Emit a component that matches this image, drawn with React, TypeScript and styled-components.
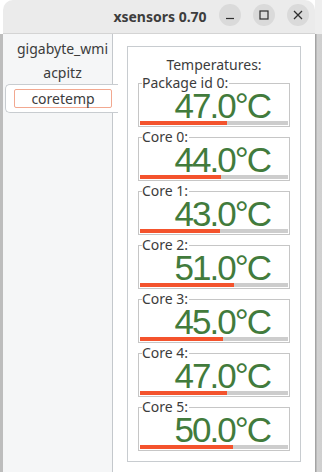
import React from "react";
import styled, { createGlobalStyle } from "styled-components";

const Global = createGlobalStyle`
  html, body { margin: 0; padding: 0; background: #ffffff; }
  body { width: 322px; height: 472px; overflow: hidden; font-family: "Noto Sans", "DejaVu Sans", sans-serif; }
  #root { width: 322px; height: 472px; }
`;

const Screen = styled.div`
  display: flex;
  width: 322px;
  height: 472px;
  overflow: hidden;
`;

const LeftEdge = styled.div`
  width: 3px;
  display: flex;
  flex-direction: column;
  &::before { content: ""; height: 34px; background: #ffffff; }
  &::after { content: ""; flex: 1; background: #bdbdbd; }
`;

const RightEdge = styled.div`
  width: 7px;
  display: flex;
  flex-direction: column;
  background: linear-gradient(90deg, #a4a4a4 0px, #a4a4a4 1px, #d2d2d2 2px, #cfcfcf 7px);
  &::before { content: ""; height: 34px; background: #eeeeee; }
`;

const Window = styled.div`
  width: 312px;
  display: flex;
  flex-direction: column;
  background: #ffffff;
`;

const TitleBar = styled.div`
  height: 33px;
  border-bottom: 1px solid #d4d4d4;
  background: #ebebeb;
  border-radius: 10px 10px 0 0;
  display: flex;
  align-items: center;
  position: relative;
`;

const Title = styled.div`
  flex: 1;
  text-align: center;
  font-family: "Noto Sans", sans-serif;
  font-weight: 700;
  font-size: 14px;
  color: #3d3d3d;
  padding-left: 2px;
`;

const Controls = styled.div`
  position: absolute;
  right: 6px;
  top: 4px;
  display: flex;
  gap: 12px;
`;

const CtrlButton = styled.div`
  width: 22px;
  height: 22px;
  border-radius: 50%;
  background: #dadada;
  display: flex;
  align-items: center;
  justify-content: center;
`;

const Content = styled.div`
  flex: 1;
  display: flex;
  min-height: 0;
`;

const Sidebar = styled.div`
  width: 109px;
  background: #f5f6f7;
  border-right: 1px solid #c4c8cc;
  display: flex;
  flex-direction: column;
  padding-top: 2px;
`;

const Tab = styled.div<{ $active?: boolean }>`
  height: ${(p) => (p.$active ? "27px" : "24px")};
  display: flex;
  align-items: center;
  justify-content: center;
  font-size: 14px;
  color: #3c3c3c;
  margin-right: -6px;
  ${(p) =>
    p.$active
      ? `
    background: #ffffff;
    border: 1px solid #c8ccd0;
    border-right: none;
    border-radius: 5px 0 0 5px;
    margin-left: 2px;
    position: relative;
    z-index: 1;
  `
      : `padding-left: 4px;`}
`;

const TabFocus = styled.div`
  width: 96px;
  height: 17px;
  border: 1px solid #f2a890;
  border-radius: 2px;
  display: flex;
  align-items: center;
  justify-content: center;
  margin-left: 2px;
`;

const Main = styled.div`
  flex: 1;
  background: #ffffff;
  padding: 12px 14px 0 14px;
  min-width: 0;
`;

const Frame = styled.div`
  border: 1px solid #c8ccd0;
  padding: 8px 10px 10px 10px;
  display: flex;
  flex-direction: column;
  gap: 2px;
`;

const FrameTitle = styled.div`
  text-align: center;
  font-size: 14px;
  color: #3c3c3c;
  line-height: 20px;
  margin-bottom: -2px;
`;

const Gauge = styled.fieldset`
  margin: 0;
  padding: 0 1px 1px 1px;
  border: 1px solid #c6c6c6;
  min-width: 0;
`;

const GaugeLabel = styled.legend`
  font-size: 14px;
  line-height: 16px;
  color: #3c3c3c;
  padding: 0 1px 0 0;
  margin-left: 2px;
`;

const Lcd = styled.div`
  height: 30px;
  line-height: 30px;
  text-align: right;
  padding-right: 18px;
  font-family: "Liberation Sans", Arial, sans-serif;
  font-size: 35px;
  letter-spacing: -2px;
  color: #427b3c;
  white-space: nowrap;
`;

const Bar = styled.div`
  height: 4px;
  background: #cdcdcd;
  display: flex;
`;

const BarFill = styled.div`
  background: #f4532d;
  height: 100%;
`;

const sensors = [
  { label: "Package id 0:", value: 47 },
  { label: "Core 0:", value: 44 },
  { label: "Core 1:", value: 43 },
  { label: "Core 2:", value: 51 },
  { label: "Core 3:", value: 45 },
  { label: "Core 4:", value: 47 },
  { label: "Core 5:", value: 50 },
];

export default function App() {
  return (
    <>
      <Global />
      <Screen>
        <LeftEdge />
        <Window>
          <TitleBar>
            <Title>xsensors 0.70</Title>
            <Controls>
              <CtrlButton>
                <svg width="10" height="10" viewBox="0 0 10 10">
                  <path d="M1 8.5h8" stroke="#2e2e2e" strokeWidth="1.2" />
                </svg>
              </CtrlButton>
              <CtrlButton>
                <svg width="10" height="10" viewBox="0 0 10 10">
                  <rect x="1" y="1" width="8" height="8" fill="none" stroke="#2e2e2e" strokeWidth="1.2" />
                </svg>
              </CtrlButton>
              <CtrlButton>
                <svg width="10" height="10" viewBox="0 0 10 10">
                  <path d="M1 1L9 9M9 1L1 9" stroke="#2e2e2e" strokeWidth="1.3" />
                </svg>
              </CtrlButton>
            </Controls>
          </TitleBar>
          <Content>
            <Sidebar>
              <Tab>gigabyte_wmi</Tab>
              <Tab>acpitz</Tab>
              <Tab $active>
                <TabFocus>coretemp</TabFocus>
              </Tab>
            </Sidebar>
            <Main>
              <Frame>
                <FrameTitle>Temperatures:</FrameTitle>
                {sensors.map((s) => (
                  <Gauge key={s.label}>
                    <GaugeLabel>{s.label}</GaugeLabel>
                    <Lcd>{s.value.toFixed(1)}°C</Lcd>
                    <Bar>
                      <BarFill style={{ width: `${(s.value / 80) * 100}%` }} />
                    </Bar>
                  </Gauge>
                ))}
              </Frame>
            </Main>
          </Content>
        </Window>
        <RightEdge />
      </Screen>
    </>
  );
}
